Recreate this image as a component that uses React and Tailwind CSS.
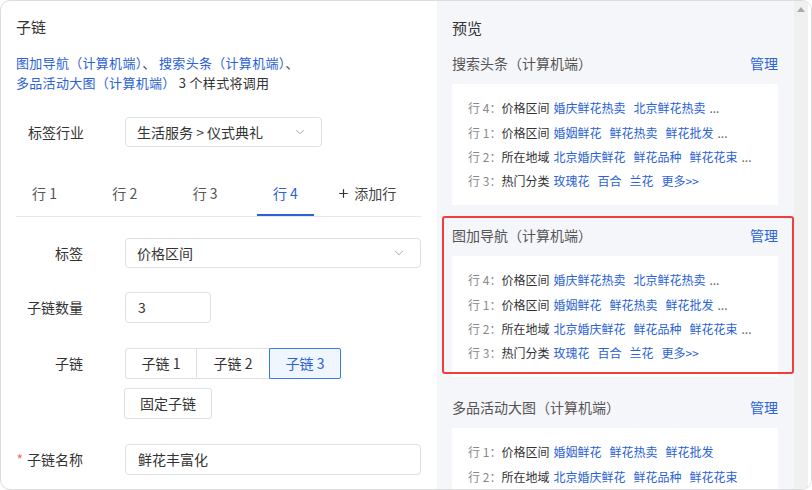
import { ChevronDown, Plus } from 'lucide-react'

const font = { fontFamily: '"Noto Sans CJK SC", "Noto Sans", sans-serif' }

const rowsA = [
  { no: '4', tag: '价格区间', links: ['婚庆鲜花热卖', '北京鲜花热卖'], more: true },
  { no: '1', tag: '价格区间', links: ['婚姻鲜花', '鲜花热卖', '鲜花批发'], more: true },
  { no: '2', tag: '所在地域', links: ['北京婚庆鲜花', '鲜花品种', '鲜花花束'], more: true },
  { no: '3', tag: '热门分类', links: ['玫瑰花', '百合', '兰花', '更多>>'], more: false },
]

const rowsB = [
  { no: '1', tag: '价格区间', links: ['婚姻鲜花', '鲜花热卖', '鲜花批发'], more: false },
  { no: '2', tag: '所在地域', links: ['北京婚庆鲜花', '鲜花品种', '鲜花花束'], more: false },
]

function PreviewRow({ r }) {
  return (
    <div className="flex items-center h-[24.4px] text-[12px] whitespace-nowrap">
      <span className="text-[#888]">行 {r.no}：</span>
      <span className="text-[#333]">{r.tag}</span>
      <div className="flex ml-[4px] gap-[8px]">
        {r.links.map((l) => (
          <span key={l} className="text-[#2b62d6]">{l}</span>
        ))}
        {r.more && <span className="text-[#666] -ml-[4px]">...</span>}
      </div>
    </div>
  )
}

function Section({ title, rows, highlight }) {
  return (
    <div className="relative mb-[19px]">
      <div className="flex items-center justify-between h-[22px]">
        <span className="text-[14px] text-[#555]">{title}</span>
        <span className="text-[14px] text-[#2b62d6]">管理</span>
      </div>
      <div className="bg-white mt-[10px] h-[121px] pt-[12px] pl-[16px]">
        {rows.map((r, i) => <PreviewRow key={i} r={r} />)}
      </div>
      {highlight && (
        <div className="absolute -top-[8px] bottom-[3px] -left-[10px] -right-[16px] border-2 border-[#f03d3d] rounded-[3px]" />
      )}
    </div>
  )
}

function Label({ children, required }) {
  return (
    <div className="w-[67px] text-right text-[14px] text-[#333] shrink-0 whitespace-nowrap">
      {required && <span className="text-[#f56c6c] mr-[4px]">*</span>}
      {children}
    </div>
  )
}

export default function App() {
  const tabs = ['行 1', '行 2', '行 3', '行 4']
  return (
    <div style={font} className="w-[812px] h-[490px] overflow-hidden bg-white rounded-[10px] border border-[#dcdcdc] flex">
      {/* left form */}
      <div className="w-[436px] shrink-0 pl-[15px] pr-[16px] pt-[15px]">
        <h2 className="text-[15px] leading-[22px] text-[#333]">子链</h2>
        <p className="mt-[15px] text-[13px] leading-[20px] text-[#333] tracking-[0.3px]">
          <span className="text-[#2b62d6]">图加导航（计算机端）</span>、 <span className="text-[#2b62d6]">搜索头条（计算机端）</span>、
          <br />
          <span className="text-[#2b62d6]">多品活动大图（计算机端）</span> 3 个样式将调用
        </p>

        <div className="flex items-center mt-[24px]">
          <div className="w-[67px] pl-[12px] text-[14px] text-[#333] shrink-0 whitespace-nowrap">标签行业</div>
          <div className="ml-[42px] w-[197px] h-[30px] border border-[#dcdfe6] rounded-[4px] flex items-center justify-between pl-[11px] pr-[14px] text-[14px] text-[#333]">
            <span>生活服务 &gt; 仪式典礼</span>
            <ChevronDown size={14} strokeWidth={1.5} className="text-[#999]" />
          </div>
        </div>

        <div className="flex items-end mt-[23px] h-[47px] border-b border-[#e4e7ed]">
          {tabs.map((t, i) => (
            <div
              key={t}
              className={`w-[57px] mr-[23.3px] h-full flex items-center justify-center text-[14px] ${i === 3 ? 'text-[#2b62d6] border-b-2 border-[#2b62d6] pt-[2px]' : 'text-[#555]'}`}
            >
              {t}
            </div>
          ))}
          <div className="h-full flex items-center text-[14px] text-[#444] gap-[4px]">
            <Plus size={13} strokeWidth={2.2} className="text-[#333]" />
            添加行
          </div>
        </div>

        <div className="flex items-center mt-[21px]">
          <Label>标签</Label>
          <div className="ml-[42px] flex-1 h-[30px] border border-[#dcdfe6] rounded-[4px] flex items-center justify-between pl-[11px] pr-[14px] text-[14px] text-[#333]">
            <span>价格区间</span>
            <ChevronDown size={14} strokeWidth={1.5} className="text-[#999]" />
          </div>
        </div>

        <div className="flex items-center mt-[24px]">
          <Label>子链数量</Label>
          <div className="ml-[42px] w-[86px] h-[31px] border border-[#dcdfe6] rounded-[4px] flex items-center pl-[12px] text-[14px] text-[#333]">
            3
          </div>
        </div>

        <div className="flex items-center mt-[25px]">
          <Label>子链</Label>
          <div className="ml-[42px] flex h-[31px] text-[14px]">
            <div className="w-[72px] border border-[#dcdfe6] rounded-l-[3px] flex items-center justify-center text-[#333]">子链 1</div>
            <div className="w-[72px] border-y border-[#dcdfe6] flex items-center justify-center text-[#333]">子链 2</div>
            <div className="w-[72px] border border-[#3b7be8] bg-[#f0f6ff] rounded-r-[2px] flex items-center justify-center text-[#2b62d6]">子链 3</div>
          </div>
        </div>

        <div className="flex mt-[9px]">
          <div className="ml-[108px] w-[88px] h-[31px] border border-[#dcdfe6] rounded-[3px] flex items-center justify-center text-[14px] text-[#333]">
            固定子链
          </div>
        </div>

        <div className="flex items-center mt-[25px]">
          <Label required>子链名称</Label>
          <div className="ml-[42px] flex-1 h-[31px] border border-[#dcdfe6] rounded-[4px] flex items-center pl-[12px] text-[14px] text-[#333]">
            鲜花丰富化
          </div>
        </div>
      </div>

      {/* preview */}
      <div className="flex-1 bg-[#f5f6fa] pl-[15px] pr-[16px] pt-[16px]">
        <h2 className="text-[15px] leading-[22px] text-[#333]">预览</h2>
        <div className="mt-[13px]">
          <Section title="搜索头条（计算机端）" rows={rowsA} />
          <Section title="图加导航（计算机端）" rows={rowsA} highlight />
          <Section title="多品活动大图（计算机端）" rows={rowsB} />
        </div>
      </div>

      {/* scrollbar */}
      <div className="w-[14px] shrink-0 bg-[#f0f0f0] flex justify-center pt-[6px]">
        <div className="w-0 h-0 border-l-[4px] border-r-[4px] border-b-[5px] border-l-transparent border-r-transparent border-b-[#a8a8a8]" />
      </div>
      <div className="w-[3px] shrink-0 bg-white" />
    </div>
  )
}
